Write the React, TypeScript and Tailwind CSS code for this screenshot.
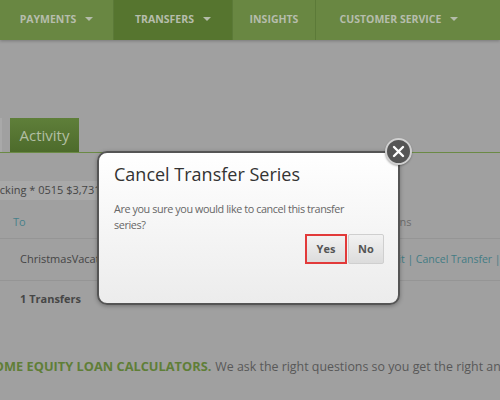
import React from 'react';

const Caret: React.FC = () => (
  <span className="ml-[9px] inline-block w-0 h-0 border-l-[4px] border-r-[4px] border-t-[4px] border-l-transparent border-r-transparent border-t-[#b4bcaa] translate-y-[-1px]" />
);

const NavItem: React.FC<{ label: string; caret?: boolean; active?: boolean; className: string }> = ({
  label,
  caret,
  active,
  className,
}) => (
  <div
    className={`${className} h-full flex items-center justify-center border-r border-[#5c7a38] text-[10.5px] font-bold text-[#b6bdac] ${
      active ? 'bg-[#56752f]' : ''
    }`}
  >
    {label}
    {caret && <Caret />}
  </div>
);

export default function App() {
  return (
    <div
      className="relative w-[500px] h-[400px] overflow-hidden bg-[#a0a0a0] text-[#444]"
      style={{ fontFamily: '"Open Sans", "Liberation Sans", sans-serif' }}
    >
      {/* Top navigation */}
      <nav className="h-[40px] flex bg-[#698742] shadow-[0_1px_3px_rgba(0,0,0,0.25)]">
        <NavItem className="w-[114px]" label="PAYMENTS" caret />
        <NavItem className="w-[119px]" label="TRANSFERS" caret active />
        <NavItem className="w-[83px]" label="INSIGHTS" />
        <NavItem className="flex-1 border-r-0 pr-[18px]" label="CUSTOMER SERVICE" caret />
      </nav>

      {/* Tabs */}
      <div className="mt-[78px] flex items-end gap-[8px] border-b border-[#6b8a45] h-[35px]">
        <div className="w-[2px] h-[34px] bg-[#a9a9a9]" />
        <div className="w-[69px] h-[34px] flex items-center justify-center bg-gradient-to-b from-[#5f7f3a] to-[#4d6b2b] text-[15px] text-[#b2bfa3]">
          Activity
        </div>
      </div>

      {/* Account selector */}
      <div className="mt-[28px] w-[240px] h-[19px] bg-[#a9a9a9] flex items-center text-[11px] text-[#454545] -ml-[20px] whitespace-nowrap">
        Checking * 0515 $3,731.22
      </div>

      {/* Table */}
      <div className="mt-[7px] text-[11px]">
        <div className="h-[32px] flex items-center border-b border-[#959595]">
          <span className="w-[386px] shrink-0 pl-[13px] text-[#48808a]">To</span>
          <span className="-ml-[12px] text-[#6c6c6c]">Actions</span>
        </div>
        <div className="h-[42px] flex items-center border-b border-[#959595] whitespace-nowrap">
          <span className="w-[386px] shrink-0 pl-[20px] text-[#454545]">ChristmasVacation</span>
          <span className="text-[10.5px] text-[#437c84]">Edit | Cancel Transfer | Skip</span>
        </div>
        <div className="h-[36px] flex items-center pl-[20px] text-[11px] font-bold text-[#464646]">
          1 Transfers
        </div>
      </div>

      {/* Promo line */}
      <div className="mt-[38px] whitespace-nowrap -ml-[16px] leading-[20px]">
        <span className="text-[12.8px] font-bold text-[#5f7e37]">HOME EQUITY LOAN CALCULATORS.</span>
        <span className="ml-[4px] text-[12.4px] text-[#585858]">We ask the right questions so you get the right answers.</span>
      </div>

      {/* Modal */}
      <div className="absolute left-[97px] top-[151px] w-[303px] h-[154px] rounded-[10px] border-2 border-[#555] bg-gradient-to-b from-white to-[#ececec] shadow-[0_1px_4px_rgba(0,0,0,0.3)]">
        <div className="pl-[15px] pr-[14px] pt-[8px]">
          <h2 className="text-[18px] text-[#333] leading-[26px]">Cancel Transfer Series</h2>
          <p className="mt-[14px] text-[10.8px] tracking-[-0.4px] leading-[16px] text-[#666] pr-[20px]">
            Are you sure you would like to cancel this transfer series?
          </p>
          <div className="mt-[1px] flex justify-end gap-[1px]">
            <button className="w-[42px] h-[30px] border-2 border-[#e23a3a] bg-gradient-to-b from-[#f2f2f2] to-[#dcdcdc] text-[11px] font-bold text-[#555]">
              Yes
            </button>
            <button className="w-[36px] h-[30px] border border-[#cfcfcf] rounded-[2px] bg-gradient-to-b from-[#f2f2f2] to-[#dcdcdc] text-[11px] font-bold text-[#555]">
              No
            </button>
          </div>
        </div>

        {/* Close button */}
        <div className="absolute -right-[14px] -top-[15px] w-[27px] h-[27px] rounded-full bg-[#555] border-2 border-[#d0d0d0] flex items-center justify-center shadow-[0_1px_2px_rgba(0,0,0,0.3)]">
          <svg width="13" height="13" viewBox="0 0 13 13">
            <path d="M2 2 L11 11 M11 2 L2 11" stroke="#fff" strokeWidth="2.4" strokeLinecap="round" />
          </svg>
        </div>
      </div>
    </div>
  );
}
